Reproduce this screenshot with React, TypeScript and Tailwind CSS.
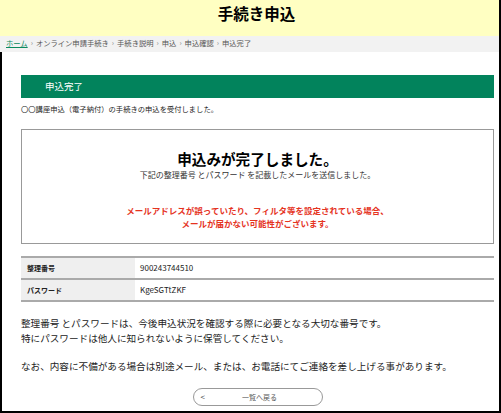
import React from "react";

const font = { fontFamily: '"Noto Sans CJK JP", "Noto Sans", sans-serif' };

function Sep() {
  return <span className="mx-[3px] text-[#888]">›</span>;
}

export default function App() {
  return (
    <div className="w-[501px] h-[413px] bg-white text-[#222] overflow-hidden flex flex-col" style={font}>
      <div className="border-r-2 border-black">
        <div className="h-[36px] bg-[#ffffc2] flex items-start justify-center pl-[14px] pt-[2px]">
          <h1 className="text-[15.5px] font-bold leading-[22px] text-black">手続き申込</h1>
        </div>
        <div className="h-[16px] bg-[#f2f2f2] flex items-center pl-[6px] text-[7.3px] text-[#555] leading-none">
          <span className="text-[#0a8a5e] underline">ホーム</span>
          <Sep />
          <span>オンライン申請手続き</span>
          <Sep />
          <span>手続き説明</span>
          <Sep />
          <span>申込</span>
          <Sep />
          <span>申込確認</span>
          <Sep />
          <span>申込完了</span>
        </div>
      </div>
      <div className="flex-1 border-l-2 border-r-2 border-b-2 border-black pl-[19px] pr-[5px] flex flex-col">
        <div className="mt-[23px] h-[23px] bg-[#02835c] flex items-center pl-[24px] text-white text-[9.5px]">
          申込完了
        </div>
        <p className="mt-[3px] text-[7.3px] leading-[16px]">〇〇講座申込（電子納付）の手続きの申込を受付しました。</p>
        <div className="mt-[12px] h-[115px] border border-[#999] flex flex-col items-center">
          <div className="mt-[19px] text-[14.6px] font-bold leading-[20px] text-black">申込みが完了しました。</div>
          <div className="text-[8px] leading-[11px] text-[#333]">下記の整理番号 とパスワード を記載したメールを送信しました。</div>
          <div className="mt-[24px] text-[8.5px] font-bold leading-[12.5px] text-[#e5341f] text-center">
            メールアドレスが誤っていたり、フィルタ等を設定されている場合、
            <br />
            メールが届かない可能性がございます。
          </div>
        </div>
        <div className="mt-[12px] border-t-2 border-[#aaa]">
          <div className="flex h-[22px] border-b-2 border-[#aaa]">
            <div className="w-[114px] bg-[#efefef] flex items-center pl-[6px] text-[7px] font-bold">整理番号</div>
            <div className="flex-1 flex items-center pl-[5px] text-[8px]">900243744510</div>
          </div>
          <div className="flex h-[22px] border-b-2 border-[#aaa]">
            <div className="w-[114px] bg-[#efefef] flex items-center pl-[6px] text-[7px] font-bold">パスワード</div>
            <div className="flex-1 flex items-center pl-[5px] text-[8px]">KgeSGTtZKF</div>
          </div>
        </div>
        <div className="mt-[14px] text-[9.6px] leading-[15px] text-[#222]">
          <p>整理番号 とパスワードは、今後申込状況を確認する際に必要となる大切な番号です。</p>
          <p>特にパスワードは他人に知られないように保管してください。</p>
          <p className="mt-[13px]">なお、内容に不備がある場合は別途メール、または、お電話にてご連絡を差し上げる事があります。</p>
        </div>
        <div className="mt-[14px] flex justify-center">
          <button className="relative w-[130px] h-[18px] rounded-full border border-[#999] bg-white flex items-center justify-center text-[7px] text-[#555]">
            <span className="absolute left-[7px] text-[8px] text-[#444]">&lt;</span>
            <span className="ml-[4px]">一覧へ戻る</span>
          </button>
        </div>
      </div>
    </div>
  );
}
